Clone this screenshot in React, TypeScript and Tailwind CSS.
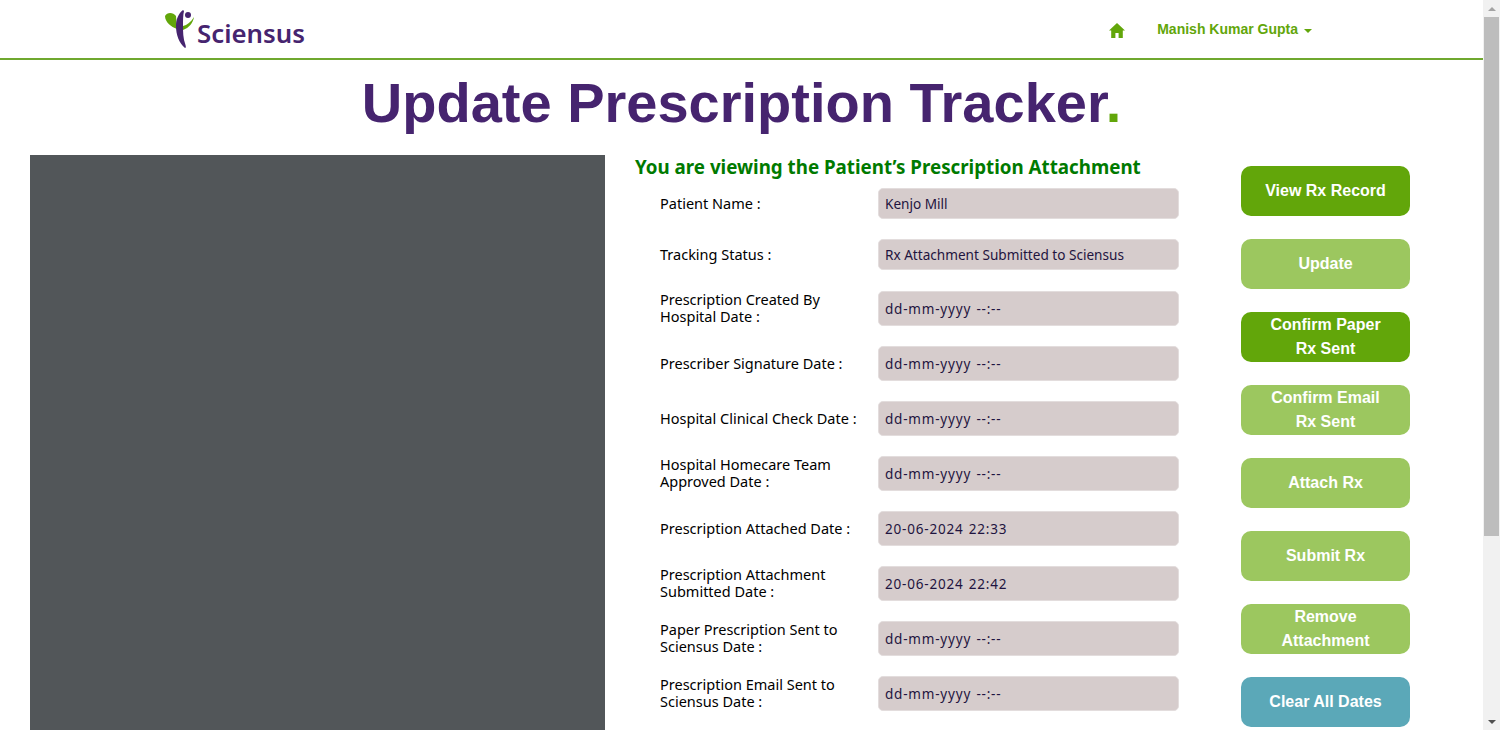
const segoe = { fontFamily: '"Noto Sans", sans-serif' };

interface Field {
  label: string[];
  value: string;
  kind: 'text' | 'date';
}

const fields: Field[] = [
  { label: ['Patient Name :'], value: 'Kenjo Mill', kind: 'text' },
  { label: ['Tracking Status :'], value: 'Rx Attachment Submitted to Sciensus', kind: 'text' },
  { label: ['Prescription Created By', 'Hospital Date :'], value: 'dd-mm-yyyy --:--', kind: 'date' },
  { label: ['Prescriber Signature Date :'], value: 'dd-mm-yyyy --:--', kind: 'date' },
  { label: ['Hospital Clinical Check Date :'], value: 'dd-mm-yyyy --:--', kind: 'date' },
  { label: ['Hospital Homecare Team', 'Approved Date :'], value: 'dd-mm-yyyy --:--', kind: 'date' },
  { label: ['Prescription Attached Date :'], value: '20-06-2024 22:33', kind: 'date' },
  { label: ['Prescription Attachment', 'Submitted Date :'], value: '20-06-2024 22:42', kind: 'date' },
  { label: ['Paper Prescription Sent to', 'Sciensus Date :'], value: 'dd-mm-yyyy --:--', kind: 'date' },
  { label: ['Prescription Email Sent to', 'Sciensus Date :'], value: 'dd-mm-yyyy --:--', kind: 'date' },
];

const actions = [
  { lines: ['View Rx Record'], cls: 'bg-[#62a60a]' },
  { lines: ['Update'], cls: 'bg-[#9cc75f]' },
  { lines: ['Confirm Paper', 'Rx Sent'], cls: 'bg-[#62a60a]' },
  { lines: ['Confirm Email', 'Rx Sent'], cls: 'bg-[#9cc75f]' },
  { lines: ['Attach Rx'], cls: 'bg-[#9cc75f]' },
  { lines: ['Submit Rx'], cls: 'bg-[#9cc75f]' },
  { lines: ['Remove', 'Attachment'], cls: 'bg-[#9cc75f]' },
  { lines: ['Clear All Dates'], cls: 'bg-[#5ba8b8]' },
];

function Logo() {
  return (
    <div className="flex items-end" style={segoe}>
      <svg width="30" height="38" viewBox="0 0 30 38">
        <path d="M0 6 C2 2 8 2 11 6 L12 19 C6 17 0 12 0 6 Z" fill="#62a60a" />
        <path d="M29 7 C28 13 24 18 18 20 L18 16 C22 15 26 12 29 7 Z" fill="#62a60a" />
        <path d="M18 0 C13 4 11 10 11 16 C11 25 14 33 20 38 C21 38 21 37 20.5 35 C18 28 18 22 18 15 C18 10 18 5 19 1 Z" fill="#46246f" />
        <circle cx="23" cy="5" r="3" fill="#46246f" />
      </svg>
      <span className="ml-[2px] mb-[-1px] text-[25.8px] leading-[32px] font-semibold text-[#46246f]">Sciensus</span>
    </div>
  );
}

function Header() {
  return (
    <header className="flex h-[60px] items-start justify-between border-b-2 border-[#6fa82f] pl-[165px] pr-[171px]">
      <div className="pt-[10px]">
        <Logo />
      </div>
      <div className="flex items-center pt-[19px] font-['Liberation_Sans',sans-serif] text-[14px] font-bold text-[#62a60a]">
        <svg width="16" height="15" viewBox="0 0 16 15" className="mr-[32px] mt-[2px]" fill="#62a60a">
          <path d="M8 0 L16 7.5 L13.8 7.5 L13.8 15 L9.6 15 L9.6 10 L6.4 10 L6.4 15 L2.2 15 L2.2 7.5 L0 7.5 Z" />
        </svg>
        <span>Manish Kumar Gupta</span>
        <span className="ml-[6px] mt-[2px] h-0 w-0 border-x-[4px] border-t-[4px] border-x-transparent border-t-[#62a60a]" />
      </div>
    </header>
  );
}

function FieldRow({ field }: { field: Field }) {
  const isDate = field.kind === 'date';
  const twoLines = field.label.length > 1;
  return (
    <div className={isDate ? 'flex h-[35px] translate-y-[1px] items-center' : 'flex h-[31px] items-center'}>
      <label
        className={
          twoLines
            ? 'mt-[-1px] w-[218px] text-[14.5px] leading-[17px] text-black'
            : 'w-[218px] text-[14.5px] leading-[17px] text-black'
        }
        style={segoe}
      >
        {field.label.map(line => (
          <div key={line}>{line}</div>
        ))}
      </label>
      <input
        readOnly
        value={field.value}
        className={
          isDate
            ? 'h-[35px] w-[301px] rounded-[5px] border border-[#e3dddd] bg-[#d6cccc] px-[6px] text-[13.5px] tracking-[0.8px] [word-spacing:1px] text-[#1f1440] outline-none'
            : 'h-[31px] w-[301px] rounded-[5px] border border-[#e3dddd] bg-[#d6cccc] px-[6px] text-[13.6px] text-[#1f1440] outline-none'
        }
        style={segoe}
      />
    </div>
  );
}

export default function App() {
  return (
    <div className="flex h-[730px] w-[1500px] overflow-hidden bg-white">
      <div className="flex h-full w-[1483px] flex-col">
        <Header />
        <h1 className="pt-[8px] text-center font-['Liberation_Sans',sans-serif] text-[56px] leading-[70px] font-bold text-[#46246f]">
          Update Prescription Tracker<span className="text-[#62a60a]">.</span>
        </h1>
        <div className="mt-[17px] flex min-h-0 flex-1 pl-[30px]">
          <div className="h-full w-[575px] bg-[#525659]" />
          <div className="ml-[30px] w-[576px]">
            <h2 className="text-[18.75px] leading-[24px] font-bold text-[#007a00]" style={segoe}>
              You are viewing the Patient’s Prescription Attachment
            </h2>
            <div className="mt-[9px] flex flex-col gap-[20px] pl-[25px]">
              {fields.map(f => (
                <FieldRow key={f.label[0]} field={f} />
              ))}
            </div>
          </div>
          <div className="ml-[30px] flex w-[170px] flex-col gap-[23px] pt-[10.5px]">
            {actions.map(a => (
              <button
                key={a.lines[0]}
                className={`h-[50px] w-[169px] rounded-[10px] font-['Liberation_Sans',sans-serif] text-[16px] leading-[23.5px] font-bold text-white ${a.cls}`}
              >
                {a.lines.map(l => (
                  <div key={l}>{l}</div>
                ))}
              </button>
            ))}
          </div>
        </div>
      </div>
      {/* scrollbar */}
      <div className="flex h-full w-[17px] flex-col items-center bg-[#f1f1f1]">
        <div className="flex h-[17px] items-center justify-center">
          <span className="h-0 w-0 border-x-[4px] border-b-[4px] border-x-transparent border-b-[#a3a3a3]" />
        </div>
        <div className="h-[519px] w-[15px] bg-[#bdbdbd]" />
        <div className="flex-1" />
        <div className="flex h-[17px] items-center justify-center">
          <span className="h-0 w-0 border-x-[4px] border-t-[4px] border-x-transparent border-t-[#505050]" />
        </div>
      </div>
    </div>
  );
}
